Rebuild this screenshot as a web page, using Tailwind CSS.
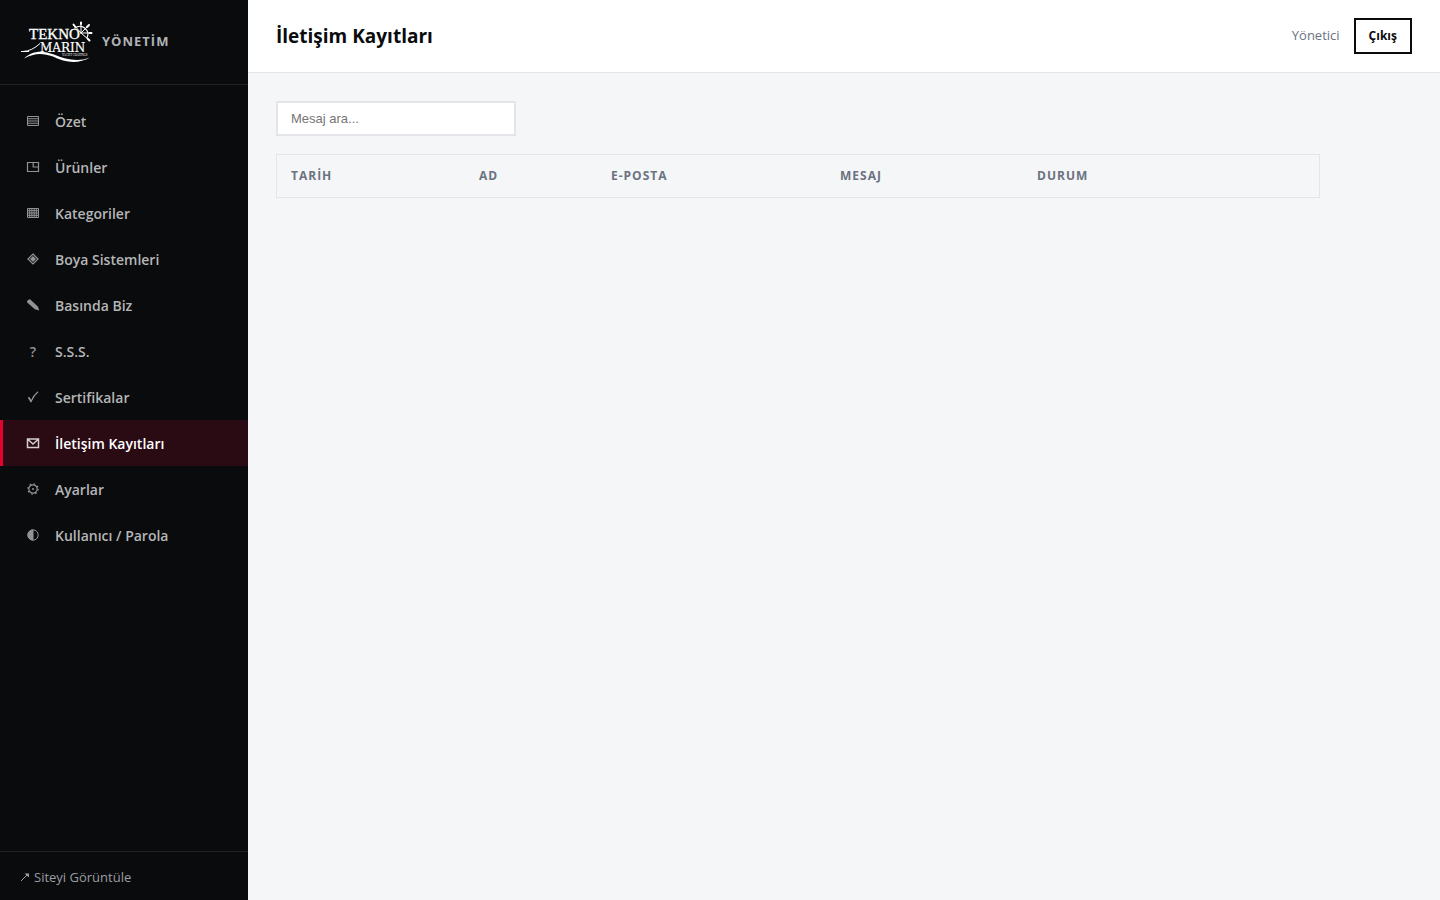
<!DOCTYPE html>
<html lang="tr">
<head>
<meta charset="utf-8">
<meta name="viewport" content="width=device-width, initial-scale=1">
<title>İletişim Kayıtları</title>
<script src="https://cdn.jsdelivr.net/npm/@tailwindcss/browser@4"></script>
</head>
<body class="flex min-h-screen bg-[#f4f6f8] text-[#0a0b0d] font-['Open_Sans','Noto_Sans',sans-serif]">
<aside class="flex w-[248px] shrink-0 flex-col bg-[#0a0b0d]">
  <div class="flex items-center gap-2 border-b border-white/10 px-5 pt-5 pb-5">
    <svg class="h-11 w-[74px]" viewBox="0 0 74 44" fill="#fff" role="img" aria-label="Tekno Marin Yacht Coatings">
      <text x="9" y="19" font-family="Liberation Serif, serif" font-size="15" stroke="#fff" stroke-width=".3">TEKNO</text>
      <text x="20" y="32" font-family="DejaVu Serif, serif" font-size="12" stroke="#fff" stroke-width=".2">MARIN</text>
      <text x="42" y="36" font-family="Liberation Serif, serif" font-size="3">YACHT COATINGS</text>
      <path d="M3 31.500Q12 31 20 23.500M1 31.500H9" fill="none" stroke="#fff"/>
      <path d="M4 38.500C13 30 23 30.500 34 34.500C46 40 59 42 70 37.500C59 44 45 43 33 36.500C22 32.500 14 33 4 38.500Z"/>
      <g fill="none" stroke="#fff" stroke-linecap="round">
        <path d="M55 8A8 8 0 0 1 67 18" stroke-width="1.300"/>
        <path d="M61 13V3M61 13L54 5M61 13L68 6M61 13H71M61 13L69 20" stroke-width="1"/>
        <path d="M61 2.500V4M53.500 4.500L55 6.500M67 7L69 5M69.500 13H71.500M68 19L69.500 20.500" stroke-width="2"/>
      </g>
    </svg>
    <span class="text-[13px] font-bold tracking-[1px] text-[#b0b3b7]">YÖNETİM</span>
  </div>
  <nav class="flex flex-1 flex-col pt-[13px] text-[14px] font-semibold text-[#b5b6b7]">
    <a href="#" class="flex h-[46px] items-center gap-[14px] border-l-3 border-transparent px-[22px]">
      <svg class="size-4 opacity-80" viewBox="0 0 16 16" fill="none" stroke="currentColor"><path d="M2.500 3.500H13.500V12.500H2.500ZM2.500 5.750H13.500M2.500 8H13.500M2.500 10.250H13.500"/></svg>Özet</a>
    <a href="#" class="flex h-[46px] items-center gap-[14px] border-l-3 border-transparent px-[22px]">
      <svg class="size-4 opacity-80" viewBox="0 0 16 16" fill="none" stroke="currentColor" stroke-width="1.200"><path d="M2.500 3.500H13.500V12.500H2.500ZM8.200 3.500V8H13.500"/></svg>Ürünler</a>
    <a href="#" class="flex h-[46px] items-center gap-[14px] border-l-3 border-transparent px-[22px]">
      <svg class="size-4 opacity-80" viewBox="0 0 16 16" fill="none" stroke="currentColor"><path d="M2.500 3.500H13.500V12.500H2.500ZM2.500 5.700H13.500M2.500 8H13.500M2.500 10.300H13.500M4.700 3.500V12.500M6.900 3.500V12.500M9.100 3.500V12.500M11.300 3.500V12.500"/></svg>Kategoriler</a>
    <a href="#" class="flex h-[46px] items-center gap-[14px] border-l-3 border-transparent px-[22px]">
      <svg class="size-4 opacity-80" viewBox="0 0 16 16" fill="currentColor"><path d="M8 3L13 8L8 13L3 8Z" fill="none" stroke="currentColor" stroke-width="1.200"/><path d="M8 5L11 8L8 11L5 8Z"/></svg>Boya Sistemleri</a>
    <a href="#" class="flex h-[46px] items-center gap-[14px] border-l-3 border-transparent px-[22px]">
      <svg class="size-4 opacity-80" viewBox="0 0 16 16" fill="currentColor"><path d="M2 4.500Q2.500 2.500 5 2.300L12.800 9.500L14.300 13.500L9.800 12.300L2.300 5.500Z"/></svg>Basında Biz</a>
    <a href="#" class="flex h-[46px] items-center gap-[14px] border-l-3 border-transparent px-[22px]">
      <span class="w-4 text-center opacity-80" aria-hidden="true">?</span>S.S.S.</a>
    <a href="#" class="flex h-[46px] items-center gap-[14px] border-l-3 border-transparent px-[22px]">
      <svg class="size-4 opacity-80" viewBox="0 0 16 16" fill="none" stroke="currentColor"><path d="M3.500 8.500L6 12.500Q8.500 6.500 13 2.800" stroke-width="1.200"/><path d="M3 8.700L4.500 8L6.600 12L5.800 13.500Z" fill="currentColor" stroke="none"/></svg>Sertifikalar</a>
    <a href="#" aria-current="page" class="flex h-[46px] items-center gap-[14px] border-l-3 border-[#e4032e] bg-[#2a0a13] px-[22px] text-white">
      <svg class="size-4 opacity-80" viewBox="0 0 16 16" fill="none" stroke="currentColor" stroke-width="1.500"><path d="M2.500 4H13.500V12.500H2.500ZM3 4.500L8 9L13 4.500"/></svg>İletişim Kayıtları</a>
    <a href="#" class="flex h-[46px] items-center gap-[14px] border-l-3 border-transparent px-[22px]">
      <svg class="size-4 opacity-80" viewBox="0 0 16 16" fill="none" stroke="currentColor"><circle cx="8" cy="8" r="4.200" stroke-width="1.200"/><circle cx="8" cy="8" r="5.200" stroke-width="1.200" stroke-dasharray="1.500 2.584"/><circle cx="8" cy="8" r="1" fill="currentColor" stroke="none"/></svg>Ayarlar</a>
    <a href="#" class="flex h-[46px] items-center gap-[14px] border-l-3 border-transparent px-[22px]">
      <svg class="size-4 opacity-80" viewBox="0 0 16 16" fill="none" stroke="currentColor"><circle cx="8" cy="8" r="5.200"/><path d="M8 3A5 5 0 0 0 8 13Z" fill="currentColor"/></svg>Kullanıcı / Parola</a>
  </nav>
  <div class="border-t border-white/10 px-5 pt-[15px] pb-[13px]">
    <a href="#" class="flex items-center gap-1 text-[13px] leading-5 text-[#9a9da1]"><svg class="size-[10px]" viewBox="0 0 10 10" fill="none" stroke="currentColor"><path d="M1 9L8 2"/><path d="M4.500 1.500H9V5.500Z" fill="currentColor" stroke="none"/></svg>Siteyi Görüntüle</a>
  </div>
</aside>
<div class="flex min-w-0 flex-1 flex-col">
  <header class="flex items-center justify-between border-b border-[#e3e5e9] bg-white px-7 py-[18px]">
    <h1 class="text-[19px] leading-7 font-bold">İletişim Kayıtları</h1>
    <div class="flex items-center gap-[14px]">
      <span class="text-[13px] text-[#6b7280]">Yönetici</span>
      <button type="button" class="h-9 border-2 border-[#0a0b0d] bg-white px-[13px] text-[12px] font-bold">Çıkış</button>
    </div>
  </header>
  <main class="w-full max-w-[1100px] p-7">
    <input type="search" aria-label="Mesaj ara" placeholder="Mesaj ara..." class="mb-[18px] block h-[35px] w-60 border-2 border-[#e3e5e9] bg-white px-[13px] font-['Liberation_Sans',sans-serif] text-[13px] placeholder:text-[#757575]">
    <table class="w-full table-fixed border-separate border-spacing-0 border border-[#e3e5e9] text-left text-[12px] leading-[18px] tracking-[1px] text-[#6b7280]">
      <thead>
        <tr>
          <th scope="col" class="w-[188px] px-[14px] py-3 font-bold">TARİH</th>
          <th scope="col" class="w-[132px] px-[14px] py-3 font-bold">AD</th>
          <th scope="col" class="w-[229px] px-[14px] py-3 font-bold">E-POSTA</th>
          <th scope="col" class="w-[197px] px-[14px] py-3 font-bold">MESAJ</th>
          <th scope="col" class="px-[14px] py-3 font-bold">DURUM</th>
        </tr>
      </thead>
      <tbody></tbody>
    </table>
  </main>
</div>
</body>
</html>
